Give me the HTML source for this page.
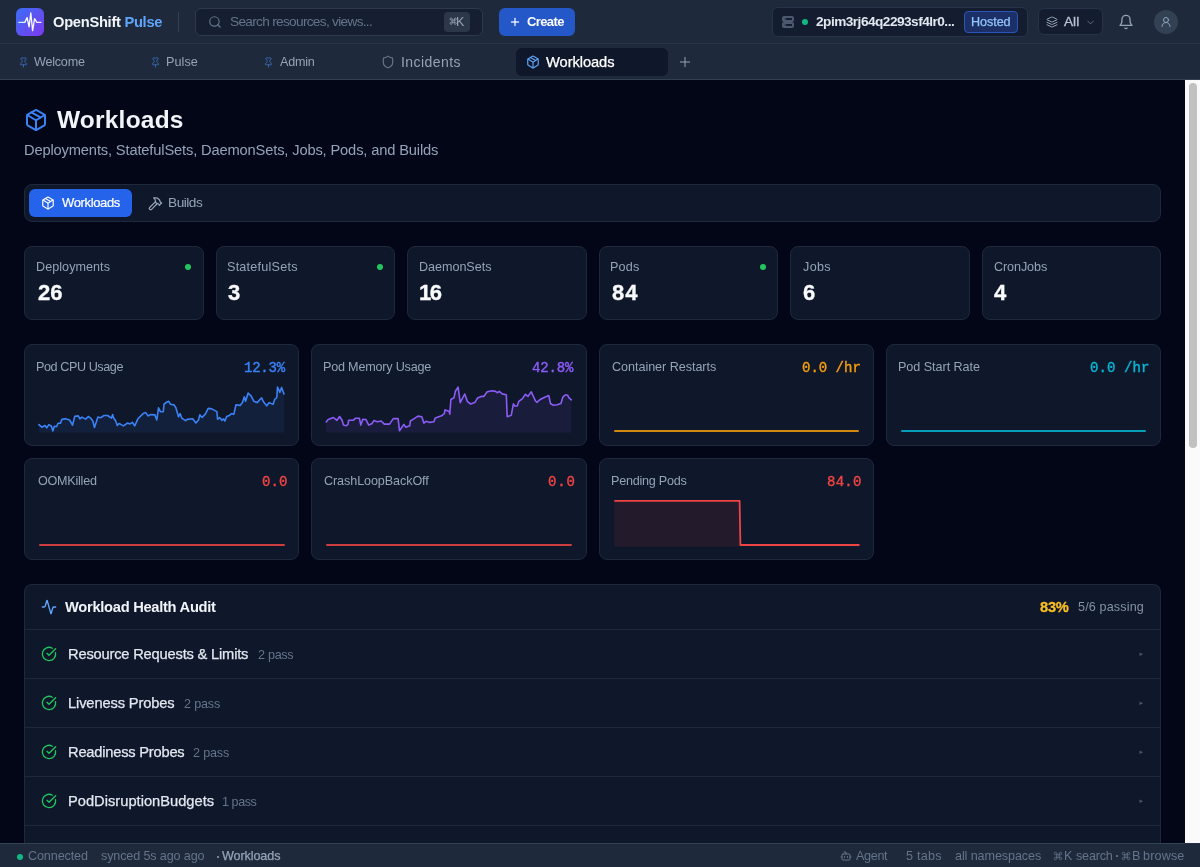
<!DOCTYPE html>
<html><head><meta charset="utf-8"><title>OpenShift Pulse - Workloads</title>
<style>
*{margin:0;padding:0;box-sizing:border-box}
html,body{width:1200px;height:867px;overflow:hidden;background:#020617;font-family:"Liberation Sans",sans-serif}
.a{position:absolute}
.t{position:absolute;white-space:nowrap;will-change:transform}
svg.a{overflow:visible}
</style></head><body>
<div class="a" style="left:0px;top:0px;width:1200px;height:43px;background:#1e293b"></div>
<div class="a" style="left:0px;top:43px;width:1200px;height:1px;background:#2a3649"></div>
<div class="a" style="left:0px;top:44px;width:1200px;height:35px;background:#1e293b"></div>
<div class="a" style="left:0px;top:79px;width:1200px;height:1px;background:#334155"></div>
<div class="a" style="left:1185px;top:80px;width:15px;height:763px;background:#fafafa"></div>
<div class="a" style="left:1189px;top:83px;width:8px;height:365px;background:#c1c1c1;border-radius:4px"></div>
<div class="a" style="left:16px;top:8px;width:28px;height:28px;border-radius:6px;background:linear-gradient(135deg,#3b6ef6,#7c3aed)"></div>
<svg class="a" style="left:16px;top:8px" width="28" height="28" viewBox="0 0 28 28"><defs><linearGradient id="wg" x1="0" x2="1"><stop offset="0" stop-color="#a5f3fc"/><stop offset=".4" stop-color="#fff"/><stop offset="1" stop-color="#f5e8ff"/></linearGradient></defs><path d="M2.8 14.4H8.8L11.1 9.6 13.1 18.9 14.8 5 16.6 22.6 18.6 10.6 20.8 14.4H24.9" fill="none" stroke="url(#wg)" stroke-width="1.3" stroke-linejoin="round" stroke-linecap="round"/></svg>
<div class="t" style="left:52.70px;top:15.01px;font-size:14.7px;line-height:14.7px;font-weight:700;color:#f1f5f9;letter-spacing:-0.284px;font-family:'Liberation Sans', sans-serif;">OpenShift <span style="color:#60a5fa">Pulse</span></div>
<div class="a" style="left:178px;top:12px;width:1px;height:20px;background:#334155"></div>
<div class="a" style="left:195px;top:8px;width:288px;height:28px;border-radius:6px;background:#161e31;border:1px solid #2d3a4e"></div>
<svg class="a" style="left:208px;top:15px" width="14" height="14" viewBox="0 0 24 24" fill="none" stroke="#64748b" stroke-width="2" stroke-linecap="round" stroke-linejoin="round"><circle cx="11" cy="11" r="8"/><path d="m21 21-4.3-4.3"/></svg>
<div class="t" style="left:229.62px;top:15.00px;font-size:13.65px;line-height:13.65px;font-weight:400;color:#64748b;letter-spacing:-0.688px;font-family:'Liberation Sans', sans-serif;">Search resources, views...</div>
<div class="a" style="left:444px;top:12px;width:26px;height:20px;border-radius:4px;background:#2c3849"></div>
<svg class="a" style="left:449.3px;top:16.8px" width="8.4" height="8.4" viewBox="0 0 24 24" fill="none" stroke="#94a3b8" stroke-width="2.2" stroke-linecap="round" stroke-linejoin="round"><path d="M15 6v12a3 3 0 1 0 3-3H6a3 3 0 1 0 3 3V6a3 3 0 1 0-3 3h12a3 3 0 1 0-3-3"/></svg>
<div class="t" style="left:456.45px;top:16.00px;font-size:12.6px;line-height:12.6px;font-weight:400;color:#94a3b8;letter-spacing:-0.700px;font-family:'Liberation Sans', sans-serif;">K</div>
<div class="a" style="left:499px;top:8px;width:76px;height:28px;border-radius:6px;background:#2458c9"></div>
<svg class="a" style="left:509px;top:16px" width="12" height="12" viewBox="0 0 24 24" fill="none" stroke="rgba(255,255,255,0.85)" stroke-width="2.8" stroke-linecap="round" stroke-linejoin="round"><path d="M5 12h14"/><path d="M12 5v14"/></svg>
<div class="t" style="left:527.23px;top:15.01px;font-size:13.0px;line-height:13.0px;font-weight:700;color:#ffffff;letter-spacing:-0.616px;font-family:'Liberation Sans', sans-serif;">Create</div>
<div class="a" style="left:772px;top:7px;width:256px;height:30px;border-radius:6px;background:#141c2f;border:1px solid #27334a"></div>
<svg class="a" style="left:782px;top:16px" width="12" height="12" viewBox="0 0 24 24" fill="none" stroke="#4b5870" stroke-width="4" stroke-linecap="round" stroke-linejoin="round"><rect width="20" height="8" x="2" y="2" rx="2" ry="2"/><rect width="20" height="8" x="2" y="14" rx="2" ry="2"/><path d="M6 6h.01"/><path d="M6 18h.01"/></svg>
<div class="a" style="left:802px;top:19px;width:6px;height:6px;background:#10b981;border-radius:50%"></div>
<div class="t" style="left:816.33px;top:15.01px;font-size:13.65px;line-height:13.65px;font-weight:700;color:#e2e8f0;letter-spacing:-0.520px;font-family:'Liberation Sans', sans-serif;">2pim3rj64q2293sf4lr0...</div>
<div class="a" style="left:964px;top:11px;width:54px;height:22px;border-radius:4px;background:#1c2f66;border:1px solid #2b54b8"></div>
<div class="t" style="left:970.71px;top:15.91px;font-size:12.6px;line-height:12.6px;font-weight:400;color:#93c5fd;letter-spacing:-0.066px;font-family:'Liberation Sans', sans-serif;;-webkit-text-stroke:0.25px #93c5fd">Hosted</div>
<div class="a" style="left:1038px;top:8px;width:65px;height:27px;border-radius:6px;background:#141c2f;border:1px solid #27334a"></div>
<svg class="a" style="left:1045.5px;top:15.9px" width="12" height="12" viewBox="0 0 24 24" fill="none" stroke="#94a3b8" stroke-width="2" stroke-linecap="round" stroke-linejoin="round"><path d="m12.83 2.18a2 2 0 0 0-1.66 0L2.6 6.08a1 1 0 0 0 0 1.83l8.58 3.91a2 2 0 0 0 1.66 0l8.58-3.9a1 1 0 0 0 0-1.83Z"/><path d="m22 17.65-9.17 4.16a2 2 0 0 1-1.66 0L2 17.65"/><path d="m22 12.65-9.17 4.16a2 2 0 0 1-1.66 0L2 12.65"/></svg>
<div class="t" style="left:1063.95px;top:15.20px;font-size:13.65px;line-height:13.65px;font-weight:400;color:#b8c4d4;letter-spacing:0.000px;font-family:'Liberation Sans', sans-serif;-webkit-text-stroke:0.3px #b8c4d4">All</div>
<svg class="a" style="left:1084.5px;top:16.5px" width="11" height="11" viewBox="0 0 24 24" fill="none" stroke="#64748b" stroke-width="2" stroke-linecap="round" stroke-linejoin="round"><path d="m6 9 6 6 6-6"/></svg>
<svg class="a" style="left:1118px;top:13.5px" width="16" height="16" viewBox="0 0 24 24" fill="none" stroke="#94a3b8" stroke-width="2" stroke-linecap="round" stroke-linejoin="round"><path d="M6 8a6 6 0 0 1 12 0c0 7 3 9 3 9H3s3-2 3-9"/><path d="M10.3 21a1.94 1.94 0 0 0 3.4 0"/></svg>
<div class="a" style="left:1154px;top:10px;width:24px;height:24px;background:#334155;border-radius:50%"></div>
<svg class="a" style="left:1160px;top:16px" width="12" height="12" viewBox="0 0 24 24" fill="none" stroke="#94a3b8" stroke-width="2" stroke-linecap="round" stroke-linejoin="round"><circle cx="12" cy="8" r="5"/><path d="M20 21a8 8 0 0 0-16 0"/></svg>
<svg class="a" style="left:17.7px;top:56.7px" width="11" height="11" viewBox="0 0 24 24" fill="none" stroke="#3b69b0" stroke-width="2" stroke-linecap="round" stroke-linejoin="round"><path d="M12 17v5"/><path d="M9 10.76a2 2 0 0 1-1.11 1.79l-1.78.9A2 2 0 0 0 5 15.24V16a1 1 0 0 0 1 1h12a1 1 0 0 0 1-1v-.76a2 2 0 0 0-1.11-1.79l-1.78-.9A2 2 0 0 1 15 10.76V7a1 1 0 0 1 1-1 2 2 0 0 0 0-4H8a2 2 0 0 0 0 4 1 1 0 0 1 1 1z"/></svg>
<div class="t" style="left:33.95px;top:56.00px;font-size:12.6px;line-height:12.6px;font-weight:400;color:#94a3b8;letter-spacing:-0.225px;font-family:'Liberation Sans', sans-serif;">Welcome</div>
<svg class="a" style="left:150.4px;top:56.7px" width="11" height="11" viewBox="0 0 24 24" fill="none" stroke="#3b69b0" stroke-width="2" stroke-linecap="round" stroke-linejoin="round"><path d="M12 17v5"/><path d="M9 10.76a2 2 0 0 1-1.11 1.79l-1.78.9A2 2 0 0 0 5 15.24V16a1 1 0 0 0 1 1h12a1 1 0 0 0 1-1v-.76a2 2 0 0 0-1.11-1.79l-1.78-.9A2 2 0 0 1 15 10.76V7a1 1 0 0 1 1-1 2 2 0 0 0 0-4H8a2 2 0 0 0 0 4 1 1 0 0 1 1 1z"/></svg>
<div class="t" style="left:165.95px;top:56.00px;font-size:12.6px;line-height:12.6px;font-weight:400;color:#94a3b8;letter-spacing:0.085px;font-family:'Liberation Sans', sans-serif;">Pulse</div>
<svg class="a" style="left:262.9px;top:56.7px" width="11" height="11" viewBox="0 0 24 24" fill="none" stroke="#3b69b0" stroke-width="2" stroke-linecap="round" stroke-linejoin="round"><path d="M12 17v5"/><path d="M9 10.76a2 2 0 0 1-1.11 1.79l-1.78.9A2 2 0 0 0 5 15.24V16a1 1 0 0 0 1 1h12a1 1 0 0 0 1-1v-.76a2 2 0 0 0-1.11-1.79l-1.78-.9A2 2 0 0 1 15 10.76V7a1 1 0 0 1 1-1 2 2 0 0 0 0-4H8a2 2 0 0 0 0 4 1 1 0 0 1 1 1z"/></svg>
<div class="t" style="left:279.95px;top:56.00px;font-size:12.6px;line-height:12.6px;font-weight:400;color:#94a3b8;letter-spacing:-0.217px;font-family:'Liberation Sans', sans-serif;">Admin</div>
<svg class="a" style="left:381px;top:55px" width="14" height="14" viewBox="0 0 24 24" fill="none" stroke="#64748b" stroke-width="2" stroke-linecap="round" stroke-linejoin="round"><path d="M20 13c0 5-3.5 7.5-7.66 8.95a1 1 0 0 1-.67-.01C7.5 20.5 4 18 4 13V6a1 1 0 0 1 1-1c2 0 4.5-1.2 6.24-2.72a1.17 1.17 0 0 1 1.52 0C14.51 3.81 17 5 19 5a1 1 0 0 1 1 1z"/></svg>
<div class="t" style="left:400.98px;top:54.91px;font-size:14.0px;line-height:14.0px;font-weight:400;color:#94a3b8;letter-spacing:0.434px;font-family:'Liberation Sans', sans-serif;">Incidents</div>
<div class="a" style="left:516px;top:48px;width:152px;height:28px;border-radius:6px;background:#0f172a"></div>
<svg class="a" style="left:525.7px;top:54.7px" width="14" height="14" viewBox="0 0 24 24" fill="none" stroke="#60a5fa" stroke-width="2" stroke-linecap="round" stroke-linejoin="round"><path d="M11 21.73a2 2 0 0 0 2 0l7-4A2 2 0 0 0 21 16V8a2 2 0 0 0-1-1.73l-7-4a2 2 0 0 0-2 0l-7 4A2 2 0 0 0 3 8v8a2 2 0 0 0 1 1.73z"/><path d="M12 22V12"/><path d="m3.3 7 7.703 4.734a2 2 0 0 0 1.994 0L20.7 7"/><path d="m7.5 4.27 9 5.15"/></svg>
<div class="t" style="left:545.95px;top:54.90px;font-size:14.7px;line-height:14.7px;font-weight:400;color:#ffffff;letter-spacing:-0.069px;font-family:'Liberation Sans', sans-serif;;-webkit-text-stroke:0.25px #ffffff">Workloads</div>
<svg class="a" style="left:676.7px;top:54.3px" width="16" height="16" viewBox="0 0 24 24" fill="none" stroke="#94a3b8" stroke-width="1.5" stroke-linecap="round" stroke-linejoin="round"><path d="M5 12h14"/><path d="M12 5v14"/></svg>
<svg class="a" style="left:24px;top:108.2px" width="24" height="24" viewBox="0 0 24 24" fill="none" stroke="#3b82f6" stroke-width="2" stroke-linecap="round" stroke-linejoin="round"><path d="M11 21.73a2 2 0 0 0 2 0l7-4A2 2 0 0 0 21 16V8a2 2 0 0 0-1-1.73l-7-4a2 2 0 0 0-2 0l-7 4A2 2 0 0 0 3 8v8a2 2 0 0 0 1 1.73z"/><path d="M12 22V12"/><path d="m3.3 7 7.703 4.734a2 2 0 0 0 1.994 0L20.7 7"/><path d="m7.5 4.27 9 5.15"/></svg>
<div class="t" style="left:56.97px;top:108.01px;font-size:24.48px;line-height:24.48px;font-weight:700;color:#f1f5f9;letter-spacing:0.222px;font-family:'Liberation Sans', sans-serif;">Workloads</div>
<div class="t" style="left:23.80px;top:142.70px;font-size:14.7px;line-height:14.7px;font-weight:400;color:#94a3b8;letter-spacing:-0.156px;font-family:'Liberation Sans', sans-serif;">Deployments, StatefulSets, DaemonSets, Jobs, Pods, and Builds</div>
<div class="a" style="left:24px;top:184px;width:1137px;height:38px;border-radius:8px;background:#0f172a;border:1px solid #1e293b"></div>
<div class="a" style="left:29px;top:189px;width:103px;height:28px;border-radius:6px;background:#2563eb"></div>
<svg class="a" style="left:40.5px;top:195.7px" width="14" height="14" viewBox="0 0 24 24" fill="none" stroke="#ffffff" stroke-width="2" stroke-linecap="round" stroke-linejoin="round"><path d="M11 21.73a2 2 0 0 0 2 0l7-4A2 2 0 0 0 21 16V8a2 2 0 0 0-1-1.73l-7-4a2 2 0 0 0-2 0l-7 4A2 2 0 0 0 3 8v8a2 2 0 0 0 1 1.73z"/><path d="M12 22V12"/><path d="m3.3 7 7.703 4.734a2 2 0 0 0 1.994 0L20.7 7"/><path d="m7.5 4.27 9 5.15"/></svg>
<div class="t" style="left:61.73px;top:196.01px;font-size:13.0px;line-height:13.0px;font-weight:400;color:#ffffff;letter-spacing:-0.364px;font-family:'Liberation Sans', sans-serif;-webkit-text-stroke:0.2px #ffffff">Workloads</div>
<svg class="a" style="left:147.5px;top:195.5px" width="15" height="15" viewBox="0 0 24 24" fill="none" stroke="#94a3b8" stroke-width="2" stroke-linecap="round" stroke-linejoin="round"><path d="m15 12-9.373 9.373a1 1 0 0 1-3.001-3L12 9"/><path d="m18 15 4-4"/><path d="m21.5 11.5-1.914-1.914A2 2 0 0 1 19 8.172v-.344a2 2 0 0 0-.586-1.414l-1.657-1.657A6 6 0 0 0 12.516 3H9l1.243 1.243A6 6 0 0 1 12 8.485V10l2 2h1.172a2 2 0 0 1 1.414.586L18.5 14.5"/></svg>
<div class="t" style="left:167.68px;top:196.01px;font-size:13.65px;line-height:13.65px;font-weight:400;color:#94a3b8;letter-spacing:-0.472px;font-family:'Liberation Sans', sans-serif;">Builds</div>
<div class="a" style="left:24.0px;top:246px;width:179.5px;height:74px;border-radius:8px;background:#0f172a;border:1px solid #1e293b"></div>
<div class="t" style="left:36.45px;top:261.22px;font-size:12.6px;line-height:12.6px;font-weight:400;color:#94a3b8;letter-spacing:0.045px;font-family:'Liberation Sans', sans-serif;">Deployments</div>
<div class="t" style="left:38.05px;top:282.21px;font-size:22.0px;line-height:22.0px;font-weight:700;color:#f8fafc;letter-spacing:-0.030px;font-family:'Liberation Sans', sans-serif;-webkit-text-stroke:0.35px #f8fafc">26</div>
<div class="a" style="left:185.0px;top:264px;width:6px;height:6px;background:#22c55e;border-radius:50%"></div>
<div class="a" style="left:215.5px;top:246px;width:179.5px;height:74px;border-radius:8px;background:#0f172a;border:1px solid #1e293b"></div>
<div class="t" style="left:227.15px;top:261.22px;font-size:12.6px;line-height:12.6px;font-weight:400;color:#94a3b8;letter-spacing:0.232px;font-family:'Liberation Sans', sans-serif;">StatefulSets</div>
<div class="t" style="left:228.00px;top:282.21px;font-size:22.0px;line-height:22.0px;font-weight:700;color:#f8fafc;letter-spacing:2.050px;font-family:'Liberation Sans', sans-serif;-webkit-text-stroke:0.35px #f8fafc">3</div>
<div class="a" style="left:376.5px;top:264px;width:6px;height:6px;background:#22c55e;border-radius:50%"></div>
<div class="a" style="left:407.0px;top:246px;width:179.5px;height:74px;border-radius:8px;background:#0f172a;border:1px solid #1e293b"></div>
<div class="t" style="left:418.95px;top:261.22px;font-size:12.6px;line-height:12.6px;font-weight:400;color:#94a3b8;letter-spacing:-0.039px;font-family:'Liberation Sans', sans-serif;">DaemonSets</div>
<div class="t" style="left:418.60px;top:282.21px;font-size:22.0px;line-height:22.0px;font-weight:700;color:#f8fafc;letter-spacing:-1.600px;font-family:'Liberation Sans', sans-serif;-webkit-text-stroke:0.35px #f8fafc">16</div>
<div class="a" style="left:598.5px;top:246px;width:179.5px;height:74px;border-radius:8px;background:#0f172a;border:1px solid #1e293b"></div>
<div class="t" style="left:610.19px;top:261.22px;font-size:12.6px;line-height:12.6px;font-weight:400;color:#94a3b8;letter-spacing:0.180px;font-family:'Liberation Sans', sans-serif;">Pods</div>
<div class="t" style="left:612.10px;top:282.21px;font-size:22.0px;line-height:22.0px;font-weight:700;color:#f8fafc;letter-spacing:0.900px;font-family:'Liberation Sans', sans-serif;-webkit-text-stroke:0.35px #f8fafc">84</div>
<div class="a" style="left:759.5px;top:264px;width:6px;height:6px;background:#22c55e;border-radius:50%"></div>
<div class="a" style="left:790.0px;top:246px;width:179.5px;height:74px;border-radius:8px;background:#0f172a;border:1px solid #1e293b"></div>
<div class="t" style="left:803.30px;top:261.22px;font-size:12.6px;line-height:12.6px;font-weight:400;color:#94a3b8;letter-spacing:0.350px;font-family:'Liberation Sans', sans-serif;">Jobs</div>
<div class="t" style="left:802.70px;top:282.21px;font-size:22.0px;line-height:22.0px;font-weight:700;color:#f8fafc;letter-spacing:1.550px;font-family:'Liberation Sans', sans-serif;-webkit-text-stroke:0.35px #f8fafc">6</div>
<div class="a" style="left:981.5px;top:246px;width:179.5px;height:74px;border-radius:8px;background:#0f172a;border:1px solid #1e293b"></div>
<div class="t" style="left:994.37px;top:261.22px;font-size:12.6px;line-height:12.6px;font-weight:400;color:#94a3b8;letter-spacing:-0.096px;font-family:'Liberation Sans', sans-serif;">CronJobs</div>
<div class="t" style="left:994.35px;top:282.21px;font-size:22.0px;line-height:22.0px;font-weight:700;color:#f8fafc;letter-spacing:1.550px;font-family:'Liberation Sans', sans-serif;-webkit-text-stroke:0.35px #f8fafc">4</div>
<div class="a" style="left:24.0px;top:344px;width:275.25px;height:101.5px;border-radius:8px;background:#0f172a;border:1px solid #1e293b"></div>
<div class="t" style="left:36.45px;top:361.31px;font-size:12.6px;line-height:12.6px;font-weight:400;color:#94a3b8;letter-spacing:-0.417px;font-family:'Liberation Sans', sans-serif;">Pod CPU Usage</div>
<div class="t" style="left:244.30px;top:361.31px;font-size:14.0px;line-height:14.0px;font-weight:400;color:#3b82f6;letter-spacing:-0.238px;font-family:'Liberation Mono', monospace;-webkit-text-stroke:0.4px #3b82f6">12.3%</div>
<div class="a" style="left:311.25px;top:344px;width:275.25px;height:101.5px;border-radius:8px;background:#0f172a;border:1px solid #1e293b"></div>
<div class="t" style="left:323.45px;top:361.31px;font-size:12.6px;line-height:12.6px;font-weight:400;color:#94a3b8;letter-spacing:-0.203px;font-family:'Liberation Sans', sans-serif;">Pod Memory Usage</div>
<div class="t" style="left:531.84px;top:361.31px;font-size:14.0px;line-height:14.0px;font-weight:400;color:#8b5cf6;letter-spacing:-0.150px;font-family:'Liberation Mono', monospace;-webkit-text-stroke:0.4px #8b5cf6">42.8%</div>
<div class="a" style="left:598.5px;top:344px;width:275.25px;height:101.5px;border-radius:8px;background:#0f172a;border:1px solid #1e293b"></div>
<div class="t" style="left:612.41px;top:361.31px;font-size:12.6px;line-height:12.6px;font-weight:400;color:#94a3b8;letter-spacing:-0.044px;font-family:'Liberation Sans', sans-serif;">Container Restarts</div>
<div class="t" style="left:801.95px;top:361.31px;font-size:14.0px;line-height:14.0px;font-weight:400;color:#f59e0b;letter-spacing:-0.003px;font-family:'Liberation Mono', monospace;-webkit-text-stroke:0.4px #f59e0b">0.0 /hr</div>
<div class="a" style="left:885.75px;top:344px;width:275.25px;height:101.5px;border-radius:8px;background:#0f172a;border:1px solid #1e293b"></div>
<div class="t" style="left:898.21px;top:361.31px;font-size:12.6px;line-height:12.6px;font-weight:400;color:#94a3b8;letter-spacing:-0.044px;font-family:'Liberation Sans', sans-serif;">Pod Start Rate</div>
<div class="t" style="left:1089.73px;top:361.31px;font-size:14.0px;line-height:14.0px;font-weight:400;color:#06b6d4;letter-spacing:0.080px;font-family:'Liberation Mono', monospace;-webkit-text-stroke:0.4px #06b6d4">0.0 /hr</div>
<div class="a" style="left:24.0px;top:458px;width:275.25px;height:101.5px;border-radius:8px;background:#0f172a;border:1px solid #1e293b"></div>
<div class="t" style="left:37.70px;top:475.31px;font-size:12.6px;line-height:12.6px;font-weight:400;color:#94a3b8;letter-spacing:-0.244px;font-family:'Liberation Sans', sans-serif;">OOMKilled</div>
<div class="t" style="left:261.60px;top:475.31px;font-size:14.0px;line-height:14.0px;font-weight:400;color:#ef4444;letter-spacing:0.100px;font-family:'Liberation Mono', monospace;-webkit-text-stroke:0.4px #ef4444">0.0</div>
<div class="a" style="left:311.25px;top:458px;width:275.25px;height:101.5px;border-radius:8px;background:#0f172a;border:1px solid #1e293b"></div>
<div class="t" style="left:324.15px;top:475.31px;font-size:12.6px;line-height:12.6px;font-weight:400;color:#94a3b8;letter-spacing:-0.093px;font-family:'Liberation Sans', sans-serif;">CrashLoopBackOff</div>
<div class="t" style="left:547.71px;top:475.31px;font-size:14.0px;line-height:14.0px;font-weight:400;color:#ef4444;letter-spacing:0.840px;font-family:'Liberation Mono', monospace;-webkit-text-stroke:0.4px #ef4444">0.0</div>
<div class="a" style="left:598.5px;top:458px;width:275.25px;height:101.5px;border-radius:8px;background:#0f172a;border:1px solid #1e293b"></div>
<div class="t" style="left:610.95px;top:475.31px;font-size:12.6px;line-height:12.6px;font-weight:400;color:#94a3b8;letter-spacing:-0.236px;font-family:'Liberation Sans', sans-serif;">Pending Pods</div>
<div class="t" style="left:826.90px;top:475.31px;font-size:14.0px;line-height:14.0px;font-weight:400;color:#ef4444;letter-spacing:0.233px;font-family:'Liberation Mono', monospace;-webkit-text-stroke:0.4px #ef4444">84.0</div>
<svg class="a" style="left:0;top:0" width="1200" height="867" viewBox="0 0 1200 867"><path d="M38.9 424.6 L41.8 427.2 L45.0 425.5 L46.7 427.8 L48.9 424.6 L51.5 426.2 L52.8 431.0 L54.4 426.2 L56.7 426.5 L58.0 423.3 L60.5 423.3 L61.8 419.4 L65.7 418.8 L69.6 420.0 L72.5 425.2 L74.8 416.2 L78.3 415.9 L79.9 418.8 L81.9 417.1 L85.7 419.1 L88.3 416.5 L90.6 418.1 L92.8 421.0 L94.5 427.5 L97.9 417.1 L100.5 417.8 L104.0 415.5 L107.6 415.5 L111.4 418.1 L112.7 414.6 L113.4 417.5 L115.6 420.7 L117.3 425.5 L118.9 423.6 L121.1 424.6 L123.4 425.9 L127.6 423.0 L129.9 423.9 L132.4 422.3 L134.7 425.9 L137.9 418.8 L143.1 413.6 L145.7 412.6 L148.0 415.9 L150.8 414.6 L154.9 414.9 L156.8 420.0 L158.5 407.8 L160.4 411.7 L163.3 411.7 L164.0 404.2 L166.9 402.0 L168.8 401.3 L170.4 404.2 L174.0 404.9 L175.9 407.8 L178.5 416.8 L180.1 413.6 L181.7 418.1 L185.6 420.7 L187.2 419.4 L192.7 418.8 L195.9 423.0 L198.5 420.0 L199.8 414.9 L202.1 417.5 L205.6 413.6 L208.2 408.4 L211.7 408.9 L216.9 411.6 L217.6 419.3 L219.7 417.5 L221.8 420.3 L223.5 418.9 L224.9 421.0 L226.6 416.5 L229.4 415.4 L231.5 413.7 L233.9 414.1 L236.0 404.7 L240.1 405.4 L242.5 402.6 L244.3 396.8 L245.6 401.3 L248.1 393.0 L251.2 396.1 L253.9 401.3 L257.1 402.6 L261.6 397.8 L263.6 402.0 L266.7 405.8 L269.2 402.6 L273.0 404.4 L274.7 399.5 L276.8 397.5 L277.5 387.1 L279.9 392.3 L281.6 387.4 L284.0 394.0 L284.0 432.6 L38.9 432.6 Z" fill="#3b82f6" fill-opacity="0.09" stroke="none"/><path d="M38.9 424.6 L41.8 427.2 L45.0 425.5 L46.7 427.8 L48.9 424.6 L51.5 426.2 L52.8 431.0 L54.4 426.2 L56.7 426.5 L58.0 423.3 L60.5 423.3 L61.8 419.4 L65.7 418.8 L69.6 420.0 L72.5 425.2 L74.8 416.2 L78.3 415.9 L79.9 418.8 L81.9 417.1 L85.7 419.1 L88.3 416.5 L90.6 418.1 L92.8 421.0 L94.5 427.5 L97.9 417.1 L100.5 417.8 L104.0 415.5 L107.6 415.5 L111.4 418.1 L112.7 414.6 L113.4 417.5 L115.6 420.7 L117.3 425.5 L118.9 423.6 L121.1 424.6 L123.4 425.9 L127.6 423.0 L129.9 423.9 L132.4 422.3 L134.7 425.9 L137.9 418.8 L143.1 413.6 L145.7 412.6 L148.0 415.9 L150.8 414.6 L154.9 414.9 L156.8 420.0 L158.5 407.8 L160.4 411.7 L163.3 411.7 L164.0 404.2 L166.9 402.0 L168.8 401.3 L170.4 404.2 L174.0 404.9 L175.9 407.8 L178.5 416.8 L180.1 413.6 L181.7 418.1 L185.6 420.7 L187.2 419.4 L192.7 418.8 L195.9 423.0 L198.5 420.0 L199.8 414.9 L202.1 417.5 L205.6 413.6 L208.2 408.4 L211.7 408.9 L216.9 411.6 L217.6 419.3 L219.7 417.5 L221.8 420.3 L223.5 418.9 L224.9 421.0 L226.6 416.5 L229.4 415.4 L231.5 413.7 L233.9 414.1 L236.0 404.7 L240.1 405.4 L242.5 402.6 L244.3 396.8 L245.6 401.3 L248.1 393.0 L251.2 396.1 L253.9 401.3 L257.1 402.6 L261.6 397.8 L263.6 402.0 L266.7 405.8 L269.2 402.6 L273.0 404.4 L274.7 399.5 L276.8 397.5 L277.5 387.1 L279.9 392.3 L281.6 387.4 L284.0 394.0" fill="none" stroke="#3b82f6" stroke-width="1.6" stroke-linejoin="round" stroke-linecap="round"/></svg>
<svg class="a" style="left:0;top:0" width="1200" height="867" viewBox="0 0 1200 867"><path d="M326.2 422.0 L328.2 419.6 L333.4 417.5 L336.9 420.3 L339.6 416.5 L342.1 420.3 L343.5 425.1 L345.9 425.8 L348.0 424.4 L348.6 420.3 L353.1 420.3 L355.6 418.2 L359.4 418.2 L360.8 425.1 L362.8 419.3 L366.0 419.6 L368.7 425.1 L371.8 423.8 L373.9 420.6 L377.4 421.7 L381.2 421.0 L384.3 424.1 L389.5 424.1 L393.3 418.6 L398.1 418.6 L399.5 430.7 L403.8 424.4 L405.9 427.2 L409.7 425.8 L410.4 421.0 L413.8 418.9 L418.0 416.1 L421.8 416.8 L423.9 423.1 L426.0 421.3 L429.8 422.4 L433.9 421.7 L435.3 417.9 L441.5 415.8 L444.3 413.7 L445.0 409.9 L449.1 411.3 L449.8 414.1 L450.9 399.5 L454.0 397.8 L455.4 391.2 L458.1 387.1 L460.2 402.6 L464.7 394.0 L467.5 401.6 L470.6 404.0 L474.7 402.6 L477.5 398.1 L481.3 396.4 L483.8 396.4 L487.2 391.8 L492.2 390.8 L495.5 391.4 L497.6 392.7 L499.3 391.4 L502.2 393.9 L506.3 394.8 L507.2 416.8 L511.3 415.2 L513.4 403.9 L514.7 406.0 L517.2 406.0 L518.8 401.4 L522.2 398.9 L525.5 394.3 L528.0 396.4 L531.3 391.8 L535.5 401.0 L536.8 402.3 L539.7 399.8 L544.7 397.3 L548.8 395.6 L550.5 403.5 L553.0 405.2 L557.2 404.8 L560.9 403.5 L563.0 396.8 L565.5 394.8 L567.6 395.2 L568.8 397.7 L571.3 399.8 L571.3 432.6 L326.2 432.6 Z" fill="#8b5cf6" fill-opacity="0.09" stroke="none"/><path d="M326.2 422.0 L328.2 419.6 L333.4 417.5 L336.9 420.3 L339.6 416.5 L342.1 420.3 L343.5 425.1 L345.9 425.8 L348.0 424.4 L348.6 420.3 L353.1 420.3 L355.6 418.2 L359.4 418.2 L360.8 425.1 L362.8 419.3 L366.0 419.6 L368.7 425.1 L371.8 423.8 L373.9 420.6 L377.4 421.7 L381.2 421.0 L384.3 424.1 L389.5 424.1 L393.3 418.6 L398.1 418.6 L399.5 430.7 L403.8 424.4 L405.9 427.2 L409.7 425.8 L410.4 421.0 L413.8 418.9 L418.0 416.1 L421.8 416.8 L423.9 423.1 L426.0 421.3 L429.8 422.4 L433.9 421.7 L435.3 417.9 L441.5 415.8 L444.3 413.7 L445.0 409.9 L449.1 411.3 L449.8 414.1 L450.9 399.5 L454.0 397.8 L455.4 391.2 L458.1 387.1 L460.2 402.6 L464.7 394.0 L467.5 401.6 L470.6 404.0 L474.7 402.6 L477.5 398.1 L481.3 396.4 L483.8 396.4 L487.2 391.8 L492.2 390.8 L495.5 391.4 L497.6 392.7 L499.3 391.4 L502.2 393.9 L506.3 394.8 L507.2 416.8 L511.3 415.2 L513.4 403.9 L514.7 406.0 L517.2 406.0 L518.8 401.4 L522.2 398.9 L525.5 394.3 L528.0 396.4 L531.3 391.8 L535.5 401.0 L536.8 402.3 L539.7 399.8 L544.7 397.3 L548.8 395.6 L550.5 403.5 L553.0 405.2 L557.2 404.8 L560.9 403.5 L563.0 396.8 L565.5 394.8 L567.6 395.2 L568.8 397.7 L571.3 399.8" fill="none" stroke="#8b5cf6" stroke-width="1.6" stroke-linejoin="round" stroke-linecap="round"/></svg>
<div class="a" style="left:613.5px;top:430px;width:245.5px;height:2px;background:#f59e0b;border-radius:1px;opacity:0.85"></div>
<div class="a" style="left:900.75px;top:430px;width:245.5px;height:2px;background:#06b6d4;border-radius:1px;opacity:0.85"></div>
<div class="a" style="left:39px;top:544px;width:245.5px;height:2px;background:#ef4444;border-radius:1px;opacity:0.85"></div>
<div class="a" style="left:326.25px;top:544px;width:245.5px;height:2px;background:#ef4444;border-radius:1px;opacity:0.85"></div>
<svg class="a" style="left:0;top:0" width="1200" height="867" viewBox="0 0 1200 867"><path d="M614.3 500.8 L739.8 500.8 L740.3 546.6 L614.3 546.6Z" fill="#ef4444" fill-opacity="0.09"/><path d="M614.3 500.8 L739.6 500.8 L740.4 545 L859.5 545" fill="none" stroke="#ef4444" stroke-width="1.8" stroke-linejoin="round"/></svg>
<div class="a" style="left:24px;top:584px;width:1137px;height:259px;border-radius:8px 8px 0 0;background:#0f172a;border:1px solid #1e293b;border-bottom:none"></div>
<svg class="a" style="left:41.3px;top:599.2px" width="16" height="16" viewBox="0 0 24 24" fill="none" stroke="#60a5fa" stroke-width="2" stroke-linecap="round" stroke-linejoin="round"><path d="M22 12h-2.48a2 2 0 0 0-1.93 1.46l-2.35 8.36a.25.25 0 0 1-.48 0L9.24 2.18a.25.25 0 0 0-.48 0l-2.35 8.36A2 2 0 0 1 4.49 12H2"/></svg>
<div class="t" style="left:65.00px;top:600.01px;font-size:14.7px;line-height:14.7px;font-weight:700;color:#f1f5f9;letter-spacing:-0.287px;font-family:'Liberation Sans', sans-serif;">Workload Health Audit</div>
<div class="t" style="left:1039.70px;top:599.90px;font-size:14.7px;line-height:14.7px;font-weight:700;color:#fbbf24;letter-spacing:-0.275px;font-family:'Liberation Sans', sans-serif;-webkit-text-stroke:0.3px #fbbf24">83%</div>
<div class="t" style="left:1077.65px;top:601.00px;font-size:12.6px;line-height:12.6px;font-weight:400;color:#8391a6;letter-spacing:0.140px;font-family:'Liberation Sans', sans-serif;">5/6 passing</div>
<div class="a" style="left:25px;top:629px;width:1135px;height:1px;background:#1e293b"></div>
<div class="a" style="left:25px;top:678px;width:1135px;height:1px;background:#1e293b"></div>
<svg class="a" style="left:40.6px;top:646.2px" width="16" height="16" viewBox="0 0 24 24" fill="none" stroke="#22c55e" stroke-width="2" stroke-linecap="round" stroke-linejoin="round"><path d="M21.801 10A10 10 0 1 1 17 3.335"/><path d="m9 11 3 3L22 4"/></svg>
<div class="t" style="left:68.30px;top:647.26px;font-size:14.7px;line-height:14.7px;font-weight:400;color:#e2e8f0;letter-spacing:-0.194px;font-family:'Liberation Sans', sans-serif;;-webkit-text-stroke:0.25px #e2e8f0">Resource Requests &amp; Limits</div>
<div class="t" style="left:257.65px;top:649.25px;font-size:12.6px;line-height:12.6px;font-weight:400;color:#64748b;letter-spacing:-0.290px;font-family:'Liberation Sans', sans-serif;">2 pass</div>
<svg class="a" style="left:1139px;top:652px" width="5" height="5" viewBox="0 0 5 5"><path d="M0.5 0.5 L4.2 2.3 L0.5 4.1Z" fill="#475569"/></svg>
<div class="a" style="left:25px;top:727px;width:1135px;height:1px;background:#1e293b"></div>
<svg class="a" style="left:40.6px;top:695.2px" width="16" height="16" viewBox="0 0 24 24" fill="none" stroke="#22c55e" stroke-width="2" stroke-linecap="round" stroke-linejoin="round"><path d="M21.801 10A10 10 0 1 1 17 3.335"/><path d="m9 11 3 3L22 4"/></svg>
<div class="t" style="left:68.30px;top:696.26px;font-size:14.7px;line-height:14.7px;font-weight:400;color:#e2e8f0;letter-spacing:-0.139px;font-family:'Liberation Sans', sans-serif;;-webkit-text-stroke:0.25px #e2e8f0">Liveness Probes</div>
<div class="t" style="left:183.65px;top:698.25px;font-size:12.6px;line-height:12.6px;font-weight:400;color:#64748b;letter-spacing:-0.160px;font-family:'Liberation Sans', sans-serif;">2 pass</div>
<svg class="a" style="left:1139px;top:701px" width="5" height="5" viewBox="0 0 5 5"><path d="M0.5 0.5 L4.2 2.3 L0.5 4.1Z" fill="#475569"/></svg>
<div class="a" style="left:25px;top:776px;width:1135px;height:1px;background:#1e293b"></div>
<svg class="a" style="left:40.6px;top:744.2px" width="16" height="16" viewBox="0 0 24 24" fill="none" stroke="#22c55e" stroke-width="2" stroke-linecap="round" stroke-linejoin="round"><path d="M21.801 10A10 10 0 1 1 17 3.335"/><path d="m9 11 3 3L22 4"/></svg>
<div class="t" style="left:68.30px;top:745.26px;font-size:14.7px;line-height:14.7px;font-weight:400;color:#e2e8f0;letter-spacing:-0.223px;font-family:'Liberation Sans', sans-serif;;-webkit-text-stroke:0.25px #e2e8f0">Readiness Probes</div>
<div class="t" style="left:193.15px;top:747.25px;font-size:12.6px;line-height:12.6px;font-weight:400;color:#64748b;letter-spacing:-0.160px;font-family:'Liberation Sans', sans-serif;">2 pass</div>
<svg class="a" style="left:1139px;top:750px" width="5" height="5" viewBox="0 0 5 5"><path d="M0.5 0.5 L4.2 2.3 L0.5 4.1Z" fill="#475569"/></svg>
<div class="a" style="left:25px;top:825px;width:1135px;height:1px;background:#1e293b"></div>
<svg class="a" style="left:40.6px;top:793.2px" width="16" height="16" viewBox="0 0 24 24" fill="none" stroke="#22c55e" stroke-width="2" stroke-linecap="round" stroke-linejoin="round"><path d="M21.801 10A10 10 0 1 1 17 3.335"/><path d="m9 11 3 3L22 4"/></svg>
<div class="t" style="left:68.30px;top:794.26px;font-size:14.7px;line-height:14.7px;font-weight:400;color:#e2e8f0;letter-spacing:-0.003px;font-family:'Liberation Sans', sans-serif;;-webkit-text-stroke:0.25px #e2e8f0">PodDisruptionBudgets</div>
<div class="t" style="left:221.55px;top:796.25px;font-size:12.6px;line-height:12.6px;font-weight:400;color:#64748b;letter-spacing:-0.440px;font-family:'Liberation Sans', sans-serif;">1 pass</div>
<svg class="a" style="left:1139px;top:799px" width="5" height="5" viewBox="0 0 5 5"><path d="M0.5 0.5 L4.2 2.3 L0.5 4.1Z" fill="#475569"/></svg>
<div class="a" style="left:0px;top:843px;width:1200px;height:24px;background:#1e293b"></div>
<div class="a" style="left:0px;top:843px;width:1185px;height:1px;background:#334155"></div>
<div class="a" style="left:1185px;top:843px;width:15px;height:1px;background:#243044"></div>
<div class="a" style="left:16.5px;top:853.5px;width:6px;height:6px;background:#10b981;border-radius:50%"></div>
<div class="t" style="left:28.00px;top:850.00px;font-size:12.6px;line-height:12.6px;font-weight:400;color:#64748b;letter-spacing:-0.119px;font-family:'Liberation Sans', sans-serif;">Connected</div>
<div class="t" style="left:100.80px;top:850.00px;font-size:12.6px;line-height:12.6px;font-weight:400;color:#64748b;letter-spacing:-0.138px;font-family:'Liberation Sans', sans-serif;">synced 5s ago ago</div>
<div class="a" style="left:216.5px;top:856px;width:2px;height:2px;background:#94a3b8;border-radius:50%"></div>
<div class="t" style="left:221.95px;top:850.00px;font-size:12.6px;line-height:12.6px;font-weight:400;color:#94a3b8;letter-spacing:-0.100px;font-family:'Liberation Sans', sans-serif;;-webkit-text-stroke:0.25px #94a3b8">Workloads</div>
<svg class="a" style="left:840px;top:850px" width="12" height="12" viewBox="0 0 24 24" fill="none" stroke="#64748b" stroke-width="2" stroke-linecap="round" stroke-linejoin="round"><path d="M12 8V4H8"/><rect width="16" height="12" x="4" y="8" rx="2"/><path d="M2 14h2"/><path d="M20 14h2"/><path d="M15 13v2"/><path d="M9 13v2"/></svg>
<div class="t" style="left:856.47px;top:850.00px;font-size:12.6px;line-height:12.6px;font-weight:400;color:#64748b;letter-spacing:-0.330px;font-family:'Liberation Sans', sans-serif;">Agent</div>
<div class="t" style="left:905.70px;top:850.00px;font-size:12.6px;line-height:12.6px;font-weight:400;color:#64748b;letter-spacing:0.272px;font-family:'Liberation Sans', sans-serif;">5 tabs</div>
<div class="t" style="left:954.99px;top:850.00px;font-size:12.6px;line-height:12.6px;font-weight:400;color:#64748b;letter-spacing:-0.102px;font-family:'Liberation Sans', sans-serif;">all namespaces</div>
<svg class="a" style="left:1053.3px;top:850.6px" width="10" height="10" viewBox="0 0 24 24" fill="none" stroke="#64748b" stroke-width="2" stroke-linecap="round" stroke-linejoin="round"><path d="M15 6v12a3 3 0 1 0 3-3H6a3 3 0 1 0 3 3V6a3 3 0 1 0-3 3h12a3 3 0 1 0-3-3"/></svg>
<div class="t" style="left:1063.55px;top:850.00px;font-size:12.6px;line-height:12.6px;font-weight:400;color:#64748b;letter-spacing:0.400px;font-family:'Liberation Sans', sans-serif;">K</div>
<div class="t" style="left:1076.19px;top:850.00px;font-size:12.6px;line-height:12.6px;font-weight:400;color:#64748b;letter-spacing:-0.186px;font-family:'Liberation Sans', sans-serif;">search</div>
<div class="a" style="left:1116px;top:855px;width:1.7px;height:1.7px;background:#64748b;border-radius:50%"></div>
<svg class="a" style="left:1121px;top:850.6px" width="10" height="10" viewBox="0 0 24 24" fill="none" stroke="#64748b" stroke-width="2" stroke-linecap="round" stroke-linejoin="round"><path d="M15 6v12a3 3 0 1 0 3-3H6a3 3 0 1 0 3 3V6a3 3 0 1 0-3 3h12a3 3 0 1 0-3-3"/></svg>
<div class="t" style="left:1132.05px;top:850.00px;font-size:12.6px;line-height:12.6px;font-weight:400;color:#64748b;letter-spacing:0.000px;font-family:'Liberation Sans', sans-serif;">B</div>
<div class="t" style="left:1142.94px;top:850.00px;font-size:12.6px;line-height:12.6px;font-weight:400;color:#64748b;letter-spacing:0.154px;font-family:'Liberation Sans', sans-serif;">browse</div>
</body></html>
